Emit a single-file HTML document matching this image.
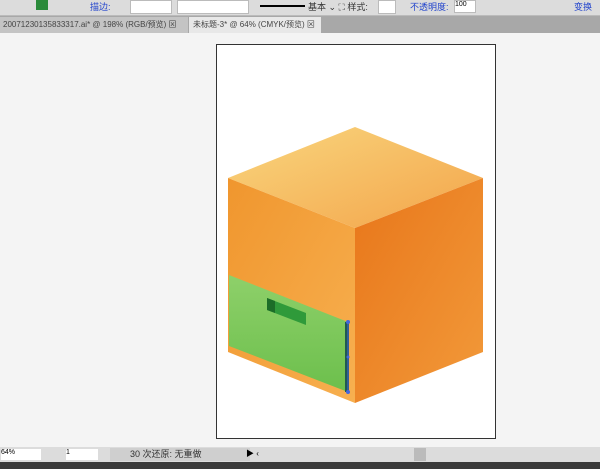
<!DOCTYPE html>
<html><head><meta charset="utf-8"><style>
body{margin:0;width:600px;height:469px;overflow:hidden;background:#f4f4f4;font-family:"Liberation Sans","Noto Sans CJK SC",sans-serif;position:relative}
.a{position:absolute;white-space:nowrap}
</style></head><body>
<div class="a" style="left:0;top:0;width:600px;height:15px;background:#dcdcdc;border-bottom:1px solid #bbb"></div>
<div class="a" style="left:36px;top:0;width:12px;height:10px;background:#2a8a3a"></div>
<div class="a" style="top:0;left:90px;font-size:9px;color:#2244cc">描边:</div>
<div class="a" style="left:130px;top:0;width:40px;height:12px;background:#fff;border:1px solid #bbb"></div>
<div class="a" style="left:177px;top:0;width:70px;height:12px;background:#fff;border:1px solid #bbb"></div>
<div class="a" style="left:260px;top:5px;width:45px;height:2px;background:#000"></div>
<div class="a" style="top:0;left:308px;font-size:9px;color:#333">基本 ⌄ ⛶ 样式:</div>
<div class="a" style="left:378px;top:0;width:16px;height:12px;background:#fff;border:1px solid #bbb"></div>
<div class="a" style="top:0;left:410px;font-size:9px;color:#2244cc">不透明度:</div>
<div class="a" style="left:454px;top:0;width:20px;height:11px;background:#fff;border:1px solid #bbb;font-size:7px">100</div>
<div class="a" style="top:0;left:574px;font-size:9px;color:#2244cc">变换</div>
<div class="a" style="left:0;top:16px;width:600px;height:17px;background:#a8a8a8"></div>
<div class="a" style="left:0;top:17px;width:185px;height:16px;background:#c4c4c4;font-size:8px;color:#444;line-height:16px;padding-left:3px;overflow:hidden">20071230135833317.ai* @ 198% (RGB/预览) ⊠</div>
<div class="a" style="left:189px;top:17px;width:128px;height:16px;background:#e8e8e8;font-size:8px;color:#444;line-height:16px;padding-left:4px;overflow:hidden">未标题-3* @ 64% (CMYK/预览) ⊠</div>
<div class="a" style="left:216px;top:44px;width:278px;height:393px;background:#fff;border:1px solid #333"></div>
<svg class="a" style="left:0;top:0" width="600" height="469">
<defs>
<linearGradient id="t" x1="0" y1="0" x2="1" y2="1"><stop offset="0" stop-color="#f9d67e"/><stop offset="1" stop-color="#f3a44a"/></linearGradient>
<linearGradient id="l" x1="0" y1="0" x2="1" y2="1"><stop offset="0" stop-color="#f0962e"/><stop offset="1" stop-color="#f7b050"/></linearGradient>
<linearGradient id="r" x1="0" y1="0" x2="1" y2="1"><stop offset="0" stop-color="#e8761a"/><stop offset="1" stop-color="#f29a3a"/></linearGradient>
<linearGradient id="g" x1="0" y1="0" x2="0" y2="1"><stop offset="0" stop-color="#8ed06a"/><stop offset="1" stop-color="#6cbf4c"/></linearGradient>
</defs>
<polygon points="355,127 483,178 355,228 228,178" fill="url(#t)"/>
<polygon points="228,178 355,228 355,403 228,352" fill="url(#l)"/>
<polygon points="355,228 483,178 483,352 355,403" fill="url(#r)"/>
<polygon points="229,275 348,322 348,392 229,346" fill="url(#g)"/>
<polygon points="267,298 306,313 306,325 267,310" fill="#2f9a3a"/>
<polygon points="267,298 275,301 275,313 267,310" fill="#1c6d28"/>
<rect x="345" y="322" width="4" height="70" fill="#1f5a52"/>
<line x1="348" y1="322" x2="348" y2="392" stroke="#4466dd" stroke-width="1"/>
<circle cx="348" cy="322" r="2" fill="#4466dd"/><circle cx="348" cy="357" r="1.5" fill="#4466dd"/><circle cx="348" cy="392" r="2" fill="#4466dd"/>
</svg>
<div class="a" style="left:0;top:447px;width:600px;height:15px;background:#dcdcdc"></div>
<div class="a" style="left:1px;top:449px;width:40px;height:11px;background:#fff;font-size:7px">64%</div>
<div class="a" style="left:66px;top:449px;width:32px;height:11px;background:#fff;font-size:7px">1</div>
<div class="a" style="left:110px;top:448px;width:140px;height:13px;background:#cfcfcf;font-size:9px;line-height:13px;text-indent:20px;color:#333">30 次还原: 无重做</div>
<div class="a" style="left:246px;top:448px;font-size:8px">▶ ‹</div>
<div class="a" style="left:414px;top:448px;width:12px;height:13px;background:#bbb"></div>
<div class="a" style="left:0;top:462px;width:600px;height:7px;background:#3a3a3a"></div>
</body></html>
